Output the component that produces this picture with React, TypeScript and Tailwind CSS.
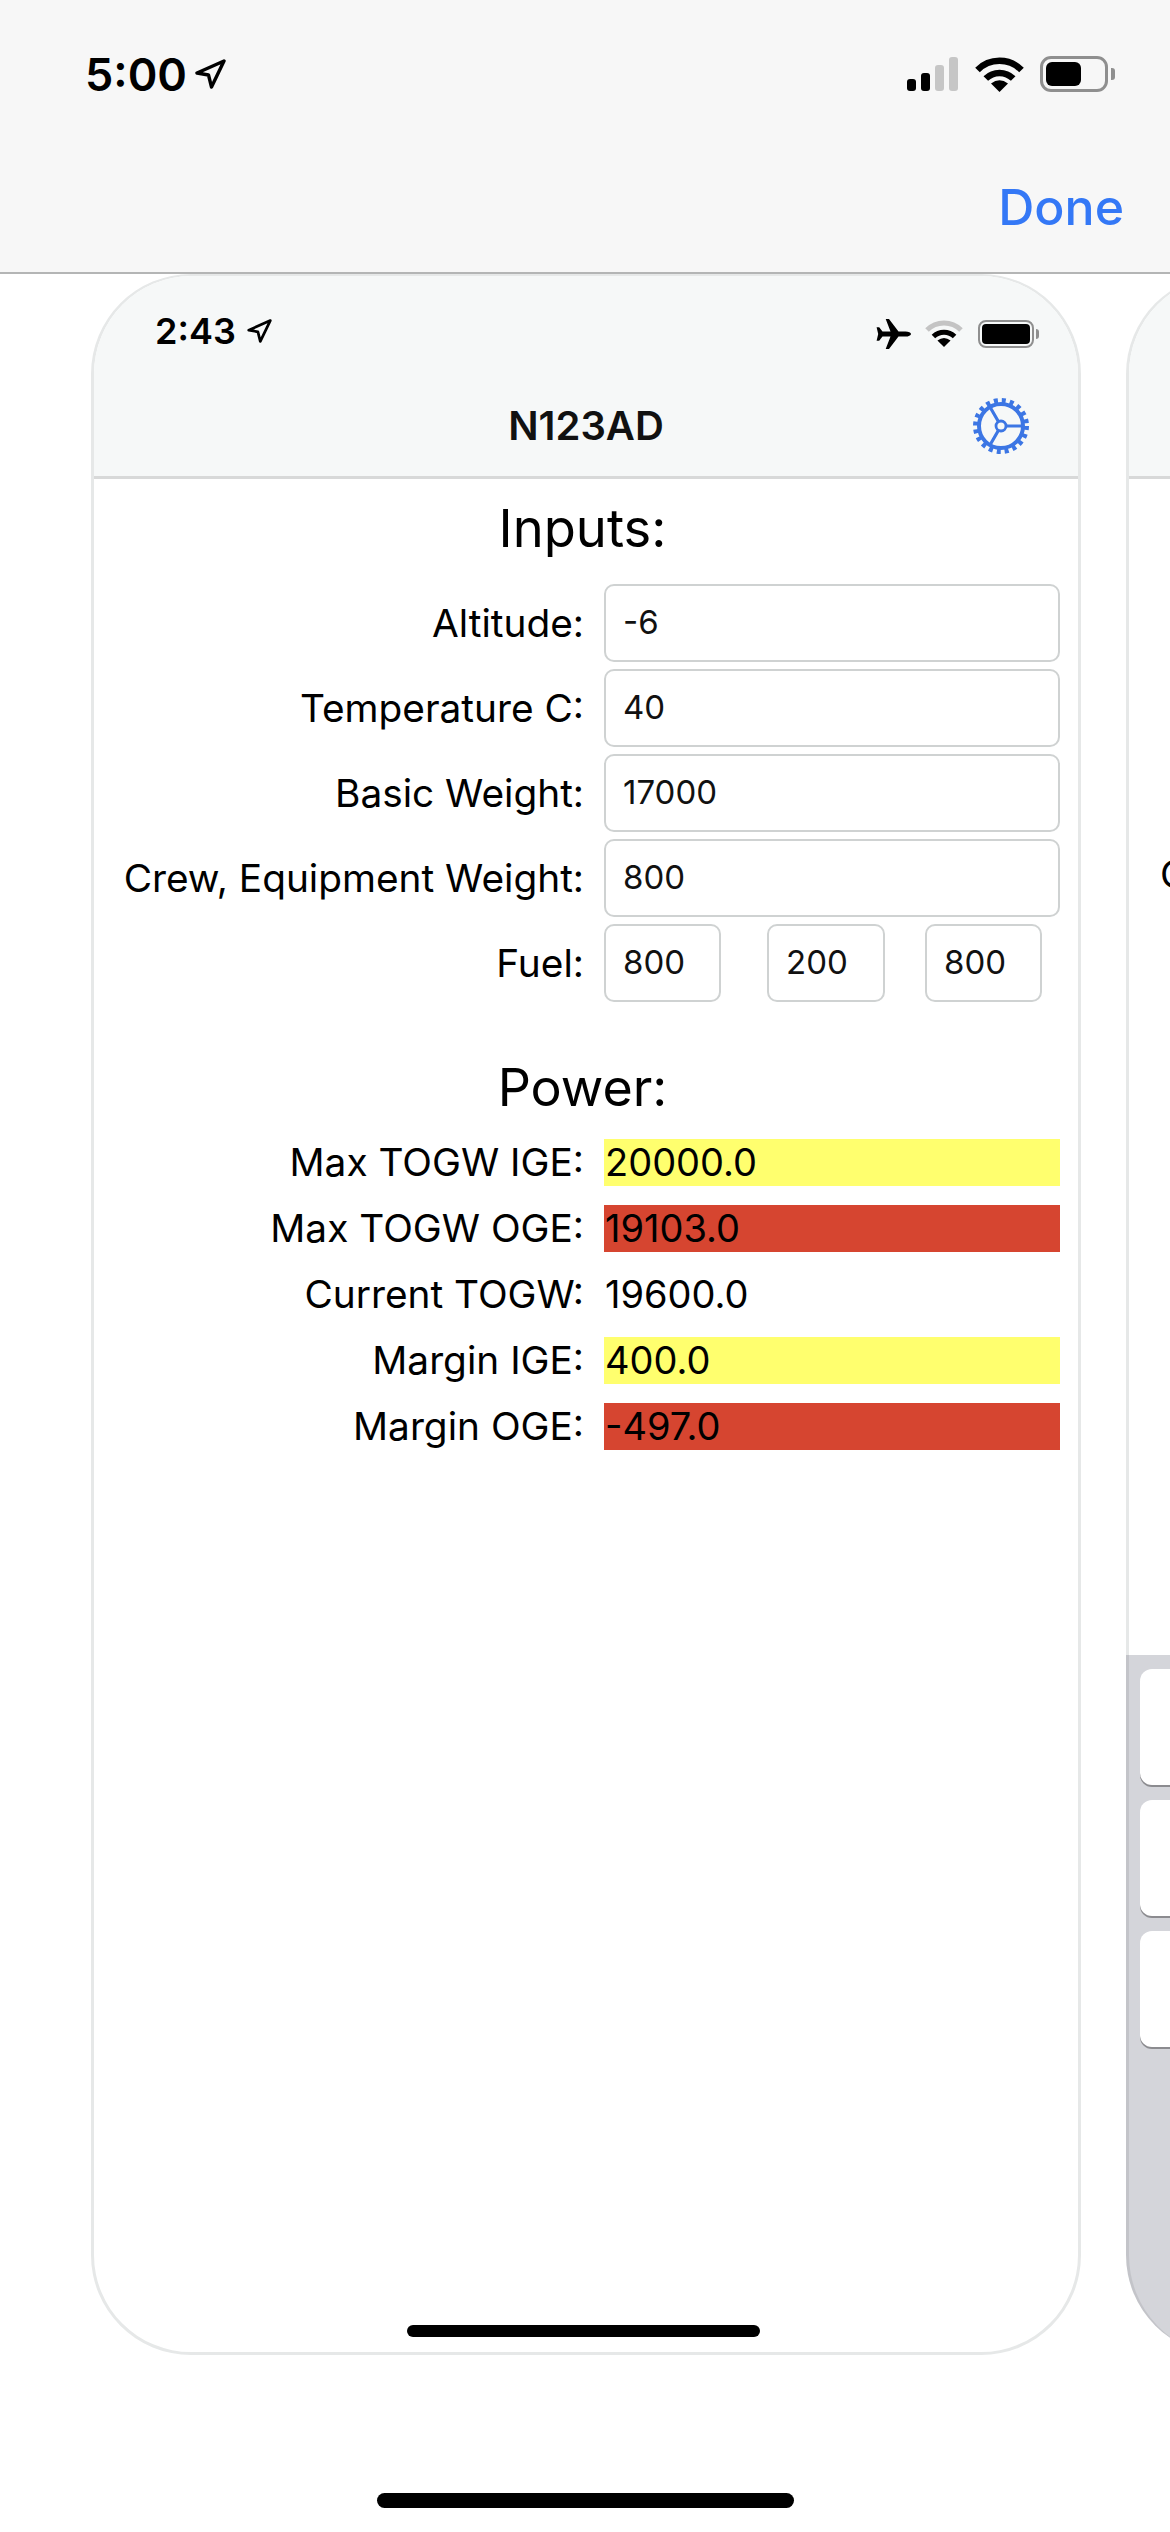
import { ReactNode } from 'react';

function LocationArrow({ className }: { className: string }) {
  return (
    <svg viewBox="0 0 31 30" className={className} fill="none" stroke="currentColor" strokeWidth="3.4" strokeLinejoin="round">
      <path d="M29 2 L2 14 L13.5 16 L16.5 28 Z" />
    </svg>
  );
}

function Wifi({ className, topColor = '#000' }: { className: string; topColor?: string }) {
  return (
    <svg viewBox="0 0 49 35" className={className} fill="none">
      <path d="M2.5 13 A31 31 0 0 1 46.5 13" stroke={topColor} strokeWidth="6.5" />
      <path d="M10.8 21.5 A19.5 19.5 0 0 1 38.2 21.5" stroke="#000" strokeWidth="6.5" />
      <path d="M24.5 35 L16 26.5 Q24.5 20 33 26.5 Z" fill="#000" />
    </svg>
  );
}

function Battery({ wrap, fill, tip }: { wrap: string; fill: string; tip: string }) {
  return (
    <div className="flex items-center">
      <div className={wrap}>
        <div className={fill} />
      </div>
      <div className={tip} />
    </div>
  );
}

function Plane() {
  return (
    <svg viewBox="0 0 35 30" className="w-[35px] h-[30px]" fill="#000">
      <path d="M35 15 c0 -1.5 -2.5 -2.6 -5.5 -2.6 h-7 L13 0 h-3.3 L14.5 12.4 H6.5 L3.2 8.3 H0.6 L2.2 15 L0.6 21.7 H3.2 L6.5 17.6 H14.5 L9.7 30 H13 L22.5 17.6 h7 c3 0 5.5 -1.1 5.5 -2.6z" />
    </svg>
  );
}

function Gear() {
  return (
    <svg viewBox="0 0 56 56" className="w-[56px] h-[56px]" fill="none" stroke="#3c76e4">
      <circle cx="28" cy="28" r="25.2" strokeWidth="5.6" strokeDasharray="3.96 3.96" />
      <circle cx="28" cy="28" r="22" strokeWidth="4" />
      <circle cx="28" cy="28" r="5" strokeWidth="2.8" />
      <path d="M33 28 H50 M25.5 23.7 L17 9 M25.5 32.3 L17 47" strokeWidth="3.2" />
    </svg>
  );
}

function Field({ value, className }: { value: string; className: string }) {
  return (
    <div className={`h-[78px] flex items-center pl-[17px] bg-white border-[2.5px] border-[#cfd2d2] rounded-[10px] text-[33px] text-[#111] ${className}`}>
      {value}
    </div>
  );
}

function Row({ label, children, tall }: { label: string; children: ReactNode; tall?: boolean }) {
  return (
    <div className={`flex items-center ${tall ? 'h-[78px]' : 'h-[47px]'}`}>
      <div className="w-[490px] text-right text-[38.8px] text-black whitespace-nowrap">{label}</div>
      <div className="ml-[20px] w-[456px] flex items-center">{children}</div>
    </div>
  );
}

function Output({ label, value, color }: { label: string; value: string; color?: string }) {
  return (
    <Row label={label}>
      <div className={`w-full h-[47px] flex items-center pl-[1px] text-[38px] text-black ${color ?? ''}`}>{value}</div>
    </Row>
  );
}

function Key() {
  return <div className="h-[116px] ml-[11px] bg-white rounded-[12px] shadow-[0_2px_0_#8b8b8f]" />;
}

export default function App() {
  return (
    <div className="w-[1170px] h-[2532px] overflow-hidden bg-white flex flex-col font-['Inter',sans-serif]">
      {/* Outer iOS chrome */}
      <header className="h-[274px] shrink-0 bg-[#f7f7f7] border-b-2 border-[#b4b5b5] px-[85px] pt-[52px]">
        <div className="flex items-center justify-between h-[44px]">
          <div className="flex items-center gap-[8px] text-black">
            <span className="text-[45px] font-semibold leading-none">5:00</span>
            <LocationArrow className="w-[31px] h-[30px]" />
          </div>
          <div className="flex items-center -mr-[30px]">
            <div className="flex items-end gap-[5px] h-[34px]">
              <div className="w-[9px] h-[12px] rounded-[3px] bg-black" />
              <div className="w-[9px] h-[18px] rounded-[3px] bg-black" />
              <div className="w-[9px] h-[26px] rounded-[3px] bg-[#c6c6c6]" />
              <div className="w-[9px] h-[34px] rounded-[3px] bg-[#c6c6c6]" />
            </div>
            <Wifi className="w-[49px] h-[35px] ml-[17px]" />
            <div className="ml-[16px]">
              <Battery
                wrap="w-[68px] h-[36px] border-[3px] border-[#8f8f8f] rounded-[11px] p-[3px]"
                fill="w-[35px] h-full bg-black rounded-[6px]"
                tip="w-[4px] h-[12px] ml-[3px] bg-[#8f8f8f] rounded-r-[3px]"
              />
            </div>
          </div>
        </div>
        <div className="mt-[86px] -mr-[39px] text-right text-[50px] font-medium leading-none text-[#3478f6]">Done</div>
      </header>

      <div className="flex pl-[91px] gap-[45px] shrink-0">
        {/* Phone screenshot card */}
        <div className="w-[990px] h-[2081px] shrink-0 overflow-hidden bg-white border-[3px] border-t-2 border-[#e6e8e8] rounded-[100px] flex flex-col">
          <div className="h-[203px] shrink-0 bg-[#f6f8f8] border-b-[3px] border-[#d8d9d9] flex flex-col px-[61px]">
            <div className="flex items-center justify-between pt-[27px] h-[82px] -mr-[22px]">
              <div className="flex items-center gap-[11px] text-black">
                <span className="text-[36px] font-semibold leading-none">2:43</span>
                <LocationArrow className="w-[25px] h-[24px]" />
              </div>
              <div className="flex items-center pt-[6px]">
                <Plane />
                <Wifi className="w-[38px] h-[27px] ml-[14px]" topColor="#c4c4c4" />
                <div className="ml-[15px]">
                  <Battery
                    wrap="w-[56px] h-[28px] border-[2.5px] border-[#8f8f8f] rounded-[8px] p-[2px]"
                    fill="w-full h-full bg-black rounded-[4px]"
                    tip="w-[3px] h-[10px] ml-[2px] bg-[#8f8f8f] rounded-r-[3px]"
                  />
                </div>
              </div>
            </div>
            <div className="relative mt-[40px] h-[56px] flex items-center justify-center -mx-[61px]">
              <span className="text-[40px] font-semibold text-[#111]">N123AD</span>
              <div className="absolute right-[49px] top-0">
                <Gear />
              </div>
            </div>
          </div>

          <div className="h-[105px] shrink-0 flex items-center justify-center pr-[7px] pb-[6px] text-[52.5px] text-black">Inputs:</div>
          <div className="flex flex-col gap-[7px]">
            <Row label="Altitude:" tall><Field value="-6" className="w-full" /></Row>
            <Row label="Temperature C:" tall><Field value="40" className="w-full" /></Row>
            <Row label="Basic Weight:" tall><Field value="17000" className="w-full" /></Row>
            <Row label="Crew, Equipment Weight:" tall><Field value="800" className="w-full" /></Row>
            <Row label="Fuel:" tall>
              <Field value="800" className="w-[117px]" />
              <Field value="200" className="w-[118px] ml-[46px]" />
              <Field value="800" className="w-[117px] ml-[40px]" />
            </Row>
          </div>

          <div className="h-[137px] shrink-0 flex items-center justify-center pt-[34px] pr-[7px] text-[52px] text-black">Power:</div>
          <div className="flex flex-col gap-[19px]">
            <Output label="Max TOGW IGE:" value="20000.0" color="bg-[#ffff6e]" />
            <Output label="Max TOGW OGE:" value="19103.0" color="bg-[#d64530]" />
            <Output label="Current TOGW:" value="19600.0" />
            <Output label="Margin IGE:" value="400.0" color="bg-[#ffff6e]" />
            <Output label="Margin OGE:" value="-497.0" color="bg-[#d64530]" />
          </div>

          <div className="mt-auto mb-[15px] self-center w-[353px] h-[12px] rounded-full bg-black mr-[6px]" />
        </div>

        {/* Next card, cut off by the screen edge */}
        <div className="w-[990px] h-[2081px] shrink-0 flex flex-col">
          <div className="h-[1381px] shrink-0 bg-white border-l-[3px] border-t-2 border-[#e6e8e8] rounded-tl-[100px] overflow-hidden">
            <div className="h-[203px] bg-[#f6f8f8] border-b-[3px] border-[#d8d9d9]" />
            <div className="h-[424px] flex items-end pl-[31px] text-[38.8px] text-black">C</div>
          </div>
          <div className="flex-1 bg-[#d4d5da] border-l-[3px] border-[#c3c4c9] rounded-bl-[100px] pt-[14px]">
            <div className="flex flex-col gap-[15px]">
              <Key />
              <Key />
              <Key />
            </div>
          </div>
        </div>
      </div>

      <div className="mt-[138px] self-center w-[417px] h-[15px] rounded-full bg-black ml-[1px]" />
    </div>
  );
}
